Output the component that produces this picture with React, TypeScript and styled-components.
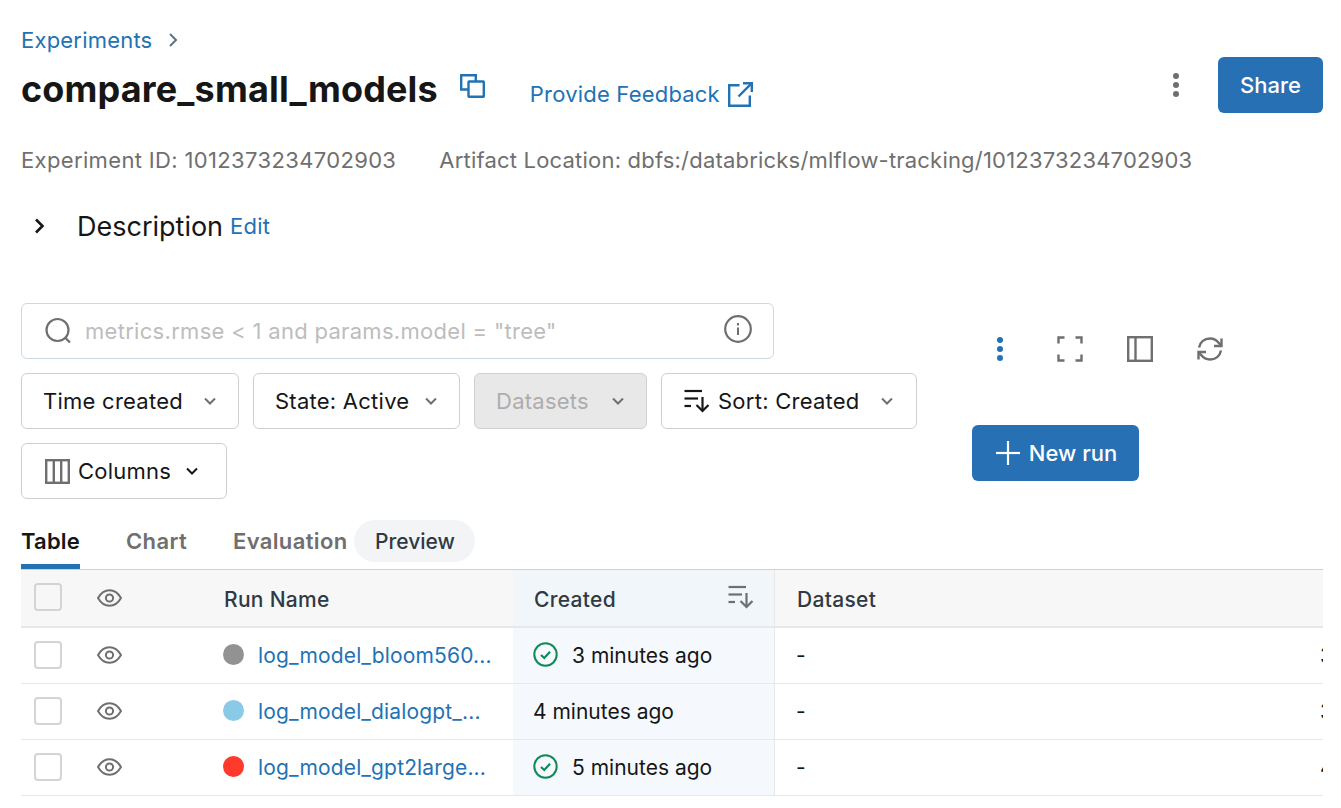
import React from 'react';
import styled, { createGlobalStyle } from 'styled-components';

const BLUE = '#2272b4';
const GREY_ICON = '#6f6f6f';

const GlobalStyle = createGlobalStyle`
  html, body {
    margin: 0;
    padding: 0;
    background: #fff;
    overflow: hidden;
  }
  * {
    box-sizing: border-box;
  }
  body {
    font-family: 'Inter', 'Liberation Sans', sans-serif;
    color: #161616;
  }
`;

const Page = styled.div`
  width: 1341px;
  height: 808px;
  padding: 26px 18px 0 21px;
  overflow: hidden;
`;

const Breadcrumb = styled.div`
  display: flex;
  align-items: center;
  gap: 14px;
  height: 28px;
  font-size: 22px;
  letter-spacing: 0.2px;
  color: ${BLUE};
`;

const HeaderRow = styled.div`
  display: flex;
  align-items: flex-start;
  margin-top: 3px;
  height: 56px;
`;

const Title = styled.h1`
  margin: 10px 0 0;
  font-size: 36px;
  line-height: 44px;
  font-weight: 700;
  letter-spacing: 0.15px;
  color: #161616;
`;

const CopyButton = styled.span`
  display: flex;
  margin: 17px 0 0 22px;
`;

const FeedbackLink = styled.a`
  display: flex;
  align-items: center;
  gap: 8px;
  margin: 20px 0 0 45px;
  height: 34px;
  font-size: 22px;
  letter-spacing: 0.2px;
  color: ${BLUE};
`;

const HeaderActions = styled.div`
  display: flex;
  align-items: center;
  margin-left: auto;
  height: 56px;
  gap: 38px;
`;

const PrimaryButton = styled.button<{ $width: number; $padLeft?: number }>`
  display: flex;
  align-items: center;
  justify-content: center;
  gap: 9px;
  width: ${(p) => p.$width}px;
  height: 56px;
  padding: 0 0 0 ${(p) => p.$padLeft ?? 0}px;
  border: none;
  border-radius: 6px;
  background: #2770b4;
  color: #fff;
  font-family: inherit;
  font-size: 22px;
  font-weight: 500;
`;

const MetaRow = styled.div`
  display: flex;
  gap: 43px;
  margin-top: 33px;
  height: 28px;
  line-height: 28px;
  font-size: 22px;
  color: #6f6f6f;
`;

const MetaItem = styled.span<{ $spacing: number }>`
  letter-spacing: ${(p) => p.$spacing}px;
`;

const DescriptionRow = styled.div`
  display: flex;
  align-items: center;
  margin-top: 34px;
  height: 36px;
  padding-left: 10px;
`;

const DescriptionLabel = styled.span`
  margin-left: 28px;
  font-size: 27px;
  color: #161616;
`;

const EditLink = styled.a`
  margin-left: 7px;
  font-size: 22px;
  letter-spacing: 0.2px;
  color: ${BLUE};
`;

const Toolbar = styled.div`
  display: flex;
  margin-top: 59px;
`;

const FilterArea = styled.div`
  display: flex;
  flex-direction: column;
  gap: 14px;
  width: 951px;
`;

const SearchBox = styled.div`
  display: flex;
  align-items: center;
  width: 753px;
  height: 56px;
  padding: 0 21px 0 22px;
  border: 1px solid #cbd9e6;
  border-radius: 6px;
`;

const SearchPlaceholder = styled.span`
  flex: 1;
  margin-left: 13px;
  font-size: 22px;
  letter-spacing: 0.3px;
  color: #bdbdbd;
`;

const InfoWrap = styled.span`
  display: flex;
  margin-bottom: 4px;
`;

const FilterRow = styled.div`
  display: flex;
  gap: 14px;
`;

const FilterButton = styled.button<{ $width: number; $disabled?: boolean; $padLeft?: number; $padRight?: number }>`
  display: flex;
  align-items: center;
  justify-content: space-between;
  width: ${(p) => p.$width}px;
  height: 56px;
  padding: 0 ${(p) => p.$padRight ?? 20}px 0 ${(p) => p.$padLeft ?? 21}px;
  border: 1px solid #cfcfcf;
  border-radius: 6px;
  background: ${(p) => (p.$disabled ? '#e8e8e8' : '#fff')};
  color: ${(p) => (p.$disabled ? '#adadad' : '#161616')};
  font-family: inherit;
  font-size: 22px;
  letter-spacing: 0.25px;
`;

const FilterLabel = styled.span<{ $gap: number }>`
  display: flex;
  align-items: center;
  gap: ${(p) => p.$gap}px;
`;

const SideTools = styled.div`
  display: flex;
  flex-direction: column;
  align-items: flex-start;
  width: 280px;
`;

const IconRow = styled.div`
  display: flex;
  margin-top: 18px;
  height: 56px;
  align-items: center;
  padding-left: 14px;
  gap: 42px;
`;

const IconCell = styled.span`
  display: flex;
  align-items: center;
  justify-content: center;
  width: 28px;
  height: 28px;
`;

const NewRunWrap = styled.div`
  margin-top: 48px;
`;

const Tabs = styled.div`
  display: flex;
  align-items: flex-start;
  margin-top: 21px;
  height: 50px;
  border-bottom: 1px solid #d1d1d1;
`;

const Tab = styled.div<{ $active?: boolean; $gap: number }>`
  height: 49px;
  margin-right: ${(p) => p.$gap}px;
  padding-top: 7px;
  font-size: 22px;
  line-height: 28px;
  font-weight: 600;
  letter-spacing: ${(p) => (p.$active ? 0.2 : 0.35)}px;
  color: ${(p) => (p.$active ? '#161616' : '#6f6f6f')};
  border-bottom: ${(p) => (p.$active ? `5px solid ${BLUE}` : 'none')};
`;

const PreviewPill = styled.span`
  display: flex;
  align-items: center;
  justify-content: center;
  width: 121px;
  height: 42px;
  margin-left: 7px;
  border-radius: 21px;
  background: #f2f4f6;
  font-size: 21px;
  font-weight: 500;
  color: #2f3a44;
`;

const Table = styled.div`
  width: 1302px;
`;

const Row = styled.div<{ $header?: boolean }>`
  display: grid;
  grid-template-columns: 76px 127px 289px 262px 1fr;
  height: ${(p) => (p.$header ? 58 : 56)}px;
  background: ${(p) => (p.$header ? '#f7f7f7' : '#fff')};
  border-bottom: ${(p) => (p.$header ? '2px solid #e8e8e8' : '1px solid #e8e8e8')};
  font-size: 21px;
  font-weight: ${(p) => (p.$header ? 500 : 400)};
  color: ${(p) => (p.$header ? '#2f3a44' : '#161616')};
`;

const Cell = styled.div`
  display: flex;
  align-items: center;
  min-width: 0;
  padding-bottom: 2px;
`;

const CellText = styled.span`
  display: flex;
  padding-top: 2px;
`;

const HeaderLabel = styled.span`
  padding-top: 4px;
  letter-spacing: 0.3px;
`;

const CreatedCell = styled(Cell)<{ $header?: boolean }>`
  justify-content: ${(p) => (p.$header ? 'space-between' : 'flex-start')};
  gap: 14px;
  padding-left: ${(p) => (p.$header ? 21 : 20)}px;
  padding-right: 19px;
  background: ${(p) => (p.$header ? '#f1f6fb' : '#f5f9fd')};
  border-right: 1px solid #e8e8e8;
`;

const Checkbox = styled.span`
  width: 28px;
  height: 28px;
  margin-left: 13px;
  border: 2px solid #d4d4d4;
  border-radius: 4px;
  background: transparent;
`;

const RunDot = styled.span<{ $color: string }>`
  flex: none;
  width: 21px;
  height: 21px;
  margin: 0 14px 0 -1px;
  border-radius: 50%;
  background: ${(p) => p.$color};
`;

const RunLink = styled.a`
  overflow: hidden;
  padding-top: 2px;
  white-space: nowrap;
  letter-spacing: 0.15px;
  color: ${BLUE};
`;

const DatasetCell = styled(Cell)<{ $header?: boolean }>`
  justify-content: space-between;
  padding-left: ${(p) => (p.$header ? 22 : 21)}px;
  white-space: nowrap;
  overflow: hidden;
`;

const ClippedValue = styled.span`
  flex: none;
  width: 2px;
  padding-top: 2px;
  overflow: hidden;
  text-indent: -1px;
`;

const Chevron = ({ color = GREY_ICON, size = 16 }: { color?: string; size?: number }) => (
  <svg width={size} height={size} viewBox="0 0 16 16" fill="none">
    <path d="M3 5.5 8 10.5 13 5.5" stroke={color} strokeWidth="2" />
  </svg>
);

const CopyIcon = () => (
  <svg width="25" height="24" viewBox="0 0 25 24" fill="none" stroke={BLUE} strokeWidth="2.4">
    <rect x="8.5" y="7.5" width="15.3" height="15.3" rx="0.5" />
    <path d="M8.5 15.5H1.2V1.2h14.6v6.3" />
  </svg>
);

const ExternalIcon = () => (
  <svg width="25" height="25" viewBox="0 0 25 25" fill="none" stroke={BLUE} strokeWidth="2.4">
    <path d="M11.5 3.2H1.2v20.6h20.6V13.5" />
    <path d="M15 1.2h8.8V10" />
    <path d="M23.8 1.2 10.5 14.5" />
  </svg>
);

const Kebab = ({ color }: { color: string }) => (
  <svg width="8" height="26" viewBox="0 0 8 26" fill={color}>
    <circle cx="4" cy="4" r="3" />
    <circle cx="4" cy="13" r="3" />
    <circle cx="4" cy="22" r="3" />
  </svg>
);

const SearchIcon = () => (
  <svg width="28" height="28" viewBox="0 0 28 28" fill="none" stroke={GREY_ICON} strokeWidth="2.2">
    <circle cx="13.5" cy="13" r="11" />
    <path d="M21.5 21 26 25.5" />
  </svg>
);

const InfoIcon = () => (
  <svg width="28" height="28" viewBox="0 0 28 28" fill="none">
    <circle cx="14" cy="14" r="12.8" stroke={GREY_ICON} strokeWidth="2.2" />
    <rect x="13" y="12.5" width="2" height="7.5" fill={GREY_ICON} />
    <rect x="13" y="8" width="2" height="2.4" fill={GREY_ICON} />
  </svg>
);

const SortIcon = ({ color }: { color: string }) => (
  <svg width="27" height="24" viewBox="0 0 27 24" fill="none" stroke={color} strokeWidth="2.2">
    <path d="M0.5 2H18" />
    <path d="M0.5 9.5H14" />
    <path d="M0.5 17H7" />
    <path d="M18.5 8V22" />
    <path d="M12.5 16 18.5 22 24.5 16" />
  </svg>
);

const ColumnsIcon = () => (
  <svg width="25" height="25" viewBox="0 0 25 25" fill="none" stroke={GREY_ICON} strokeWidth="2.4">
    <rect x="1.2" y="1.2" width="22.6" height="22.6" />
    <path d="M8.8 1.2V23.8" />
    <path d="M16.2 1.2V23.8" />
  </svg>
);

const FullscreenIcon = () => (
  <svg width="26" height="26" viewBox="0 0 26 26" fill="none" stroke={GREY_ICON} strokeWidth="2.4">
    <path d="M7.5 1.5H1.5V7.5" />
    <path d="M18.5 1.5H24.5V7.5" />
    <path d="M1.5 18.5V24.5H7.5" />
    <path d="M24.5 18.5V24.5H18.5" />
  </svg>
);

const PanelIcon = () => (
  <svg width="26" height="26" viewBox="0 0 26 26" fill="none" stroke={GREY_ICON} strokeWidth="2.4">
    <rect x="1.2" y="1.2" width="23.6" height="23.6" />
    <path d="M8.5 1.2V24.8" />
  </svg>
);

const RefreshIcon = () => (
  <svg width="26" height="26" viewBox="0 0 26 26" fill="none" stroke={GREY_ICON} strokeWidth="2.4">
    <path d="M2 11.5C3 6 7.5 2.5 13 2.5c3.6 0 6.6 1.6 8.8 4.4L24.5 10" />
    <path d="M24.5 2.5V10h-7.5" />
    <path d="M24 14.5C23 20 18.5 23.5 13 23.5c-3.6 0-6.6-1.6-8.8-4.4L1.5 16" />
    <path d="M1.5 23.5V16H9" />
  </svg>
);

const PlusIcon = () => (
  <svg width="24" height="24" viewBox="0 0 24 24" stroke="#fff" strokeWidth="2.2">
    <path d="M12 0V24" />
    <path d="M0 12H24" />
  </svg>
);

const EyeIcon = () => (
  <svg width="25" height="18" viewBox="0 0 25 18" fill="none" stroke={GREY_ICON} strokeWidth="2">
    <path d="M1 9C4 3.8 8 1.2 12.5 1.2S21 3.8 24 9c-3 5.2-7 7.8-11.5 7.8S4 14.2 1 9Z" />
    <circle cx="12.5" cy="9" r="3.6" />
  </svg>
);

const SuccessIcon = () => (
  <svg width="25" height="25" viewBox="0 0 25 25" fill="none" stroke="#0f8a55" strokeWidth="2">
    <circle cx="12.5" cy="12.5" r="11.2" />
    <path d="M8 13 11.3 16 17 9.8" strokeWidth="2.2" />
  </svg>
);

const runs = [
  { name: 'log_model_bloom560...', color: '#929292', created: '3 minutes ago', success: true, edge: '3' },
  { name: 'log_model_dialogpt_...', color: '#8acae6', created: '4 minutes ago', success: false, edge: '3' },
  { name: 'log_model_gpt2large...', color: '#ff3a2a', created: '5 minutes ago', success: true, edge: '4' },
];

export default function App() {
  return (
    <Page>
      <GlobalStyle />
      <Breadcrumb>
        <span>Experiments</span>
        <svg width="14" height="16" viewBox="0 0 14 16" fill="none" stroke="#5f7281" strokeWidth="2">
          <path d="M4 2 10 8 4 14" />
        </svg>
      </Breadcrumb>

      <HeaderRow>
        <Title>compare_small_models</Title>
        <CopyButton>
          <CopyIcon />
        </CopyButton>
        <FeedbackLink>
          Provide Feedback
          <ExternalIcon />
        </FeedbackLink>
        <HeaderActions>
          <Kebab color={GREY_ICON} />
          <PrimaryButton $width={105}>Share</PrimaryButton>
        </HeaderActions>
      </HeaderRow>

      <MetaRow>
        <MetaItem $spacing={0.35}>Experiment ID: 1012373234702903</MetaItem>
        <MetaItem $spacing={0.2}>Artifact Location: dbfs:/databricks/mlflow-tracking/1012373234702903</MetaItem>
      </MetaRow>

      <DescriptionRow>
        <svg width="18" height="18" viewBox="0 0 18 18" fill="none" stroke="#161616" strokeWidth="2.6">
          <path d="M5 2.5 11.5 9 5 15.5" />
        </svg>
        <DescriptionLabel>Description</DescriptionLabel>
        <EditLink>Edit</EditLink>
      </DescriptionRow>

      <Toolbar>
        <FilterArea>
          <SearchBox>
            <SearchIcon />
            <SearchPlaceholder>metrics.rmse &lt; 1 and params.model = "tree"</SearchPlaceholder>
            <InfoWrap>
              <InfoIcon />
            </InfoWrap>
          </SearchBox>
          <FilterRow>
            <FilterButton $width={218}>
              Time created
              <Chevron />
            </FilterButton>
            <FilterButton $width={207}>
              State: Active
              <Chevron />
            </FilterButton>
            <FilterButton $width={173} $disabled>
              Datasets
              <Chevron />
            </FilterButton>
            <FilterButton $width={256} $padLeft={22} $padRight={21}>
              <FilterLabel $gap={7}>
                <SortIcon color="#161616" />
                Sort: Created
              </FilterLabel>
              <Chevron />
            </FilterButton>
          </FilterRow>
          <FilterRow>
            <FilterButton $width={206} $padLeft={23} $padRight={26}>
              <FilterLabel $gap={8}>
                <ColumnsIcon />
                Columns
              </FilterLabel>
              <Chevron color="#161616" />
            </FilterButton>
          </FilterRow>
        </FilterArea>
        <SideTools>
          <IconRow>
            <IconCell>
              <Kebab color={BLUE} />
            </IconCell>
            <IconCell>
              <FullscreenIcon />
            </IconCell>
            <IconCell>
              <PanelIcon />
            </IconCell>
            <IconCell>
              <RefreshIcon />
            </IconCell>
          </IconRow>
          <NewRunWrap>
            <PrimaryButton $width={167} $padLeft={2}>
              <PlusIcon />
              New run
            </PrimaryButton>
          </NewRunWrap>
        </SideTools>
      </Toolbar>

      <Tabs>
        <Tab $active $gap={46}>Table</Tab>
        <Tab $gap={46}>Chart</Tab>
        <Tab $gap={0}>Evaluation</Tab>
        <PreviewPill>Preview</PreviewPill>
      </Tabs>

      <Table>
        <Row $header>
          <Cell>
            <Checkbox />
          </Cell>
          <Cell>
            <CellText>
              <EyeIcon />
            </CellText>
          </Cell>
          <Cell>
            <HeaderLabel>Run Name</HeaderLabel>
          </Cell>
          <CreatedCell $header>
            <HeaderLabel>Created</HeaderLabel>
            <SortIcon color={GREY_ICON} />
          </CreatedCell>
          <DatasetCell $header>
            <HeaderLabel>Dataset</HeaderLabel>
          </DatasetCell>
        </Row>
        {runs.map((run) => (
          <Row key={run.name}>
            <Cell>
              <Checkbox />
            </Cell>
            <Cell>
              <EyeIcon />
            </Cell>
            <Cell>
              <RunDot $color={run.color} />
              <RunLink>{run.name}</RunLink>
            </Cell>
            <CreatedCell>
              {run.success && <SuccessIcon />}
              <CellText>{run.created}</CellText>
            </CreatedCell>
            <DatasetCell>
              <CellText>-</CellText>
              <ClippedValue>{run.edge}</ClippedValue>
            </DatasetCell>
          </Row>
        ))}
      </Table>
    </Page>
  );
}
